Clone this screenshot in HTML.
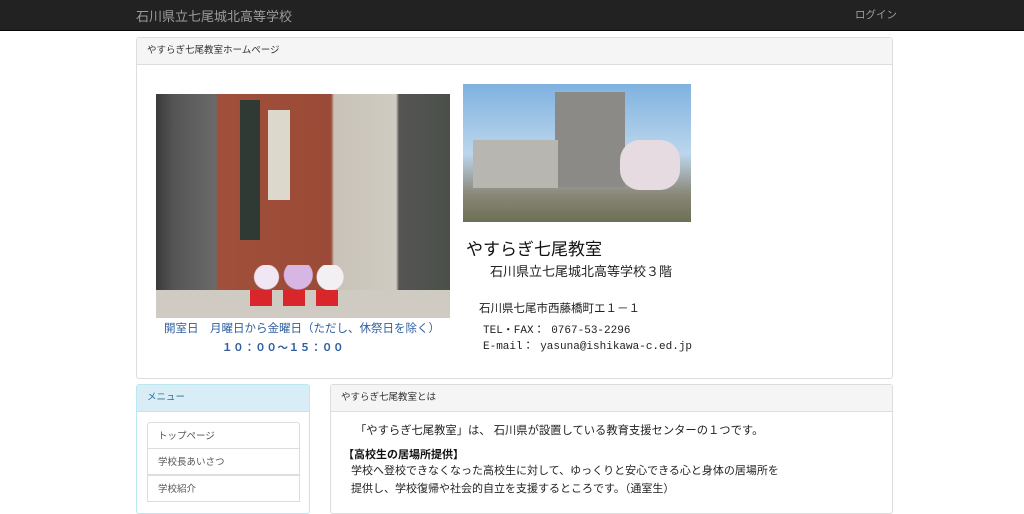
<!DOCTYPE html><html><head><meta charset="utf-8"><style>
body{margin:0;background:#fff;font-family:"Liberation Sans","Noto Sans CJK JP",sans-serif;color:#333;width:1024px;height:505px;overflow:hidden;position:relative}
.nav{position:absolute;left:0;top:0;width:1024px;height:30px;background:#222;border-bottom:1px solid #080808}
.nav .t{position:absolute;left:136px;top:6px;color:#9d9d9d;font-size:13px}
.nav .l{position:absolute;left:855px;top:7px;color:#9d9d9d;font-size:10.5px}
.p{position:absolute;border:1px solid #ddd;border-radius:3px;background:#fff;box-sizing:border-box}
.h{height:26px;background:#f5f5f5;border-bottom:1px solid #ddd;font-size:9.5px;line-height:26px;padding-left:10px}
.a{position:absolute;white-space:nowrap}
.item{position:absolute;left:10px;width:153px;height:27px;border:1px solid #ddd;box-sizing:border-box;font-size:9.5px;line-height:26px;padding-left:10px;color:#555}
</style></head><body>
<div class="nav"><div class="t">石川県立七尾城北高等学校</div><div class="l">ログイン</div></div>
<div class="p" style="left:136px;top:37px;width:757px;height:342px"><div class="h">やすらぎ七尾教室ホームページ</div></div>
<div class="a" style="left:156px;top:94px;width:294px;height:224px;background:linear-gradient(90deg,#3a3a3a 0,#555 18px,#6a6a6a 60px,#a0503a 62px,#9a4a36 175px,#c8c2b8 178px,#d0cbc2 240px,#555 243px,#4a5048 294px)"></div>
<div class="a" style="left:240px;top:100px;width:20px;height:140px;background:#2f3a34"></div>
<div class="a" style="left:268px;top:110px;width:22px;height:90px;background:#ddd8cc"></div>
<div class="a" style="left:156px;top:290px;width:294px;height:28px;background:#cfcac2"></div>
<div class="a" style="left:240px;top:265px;width:106px;height:40px;background:radial-gradient(circle at 25% 30%,#f0e6f4 12px,transparent 13px),radial-gradient(circle at 55% 25%,#d8b6e4 14px,transparent 15px),radial-gradient(circle at 85% 30%,#f2f0f2 13px,transparent 14px)"></div>
<div class="a" style="left:250px;top:290px;width:88px;height:16px;background:repeating-linear-gradient(90deg,#d8262a 0,#d8262a 22px,transparent 22px,transparent 33px)"></div>
<div class="a" style="left:463px;top:84px;width:228px;height:138px;background:linear-gradient(180deg,#7fb2e0 0,#bcd6ec 70px,#8a8878 110px,#6d6f55 138px)"></div>
<div class="a" style="left:555px;top:92px;width:70px;height:95px;background:#8b8a86"></div>
<div class="a" style="left:473px;top:140px;width:85px;height:48px;background:#b8b6b0"></div>
<div class="a" style="left:620px;top:140px;width:60px;height:50px;background:#e7dbe2;border-radius:20px"></div>
<div class="a" style="left:466px;top:235px;font-size:17px;color:#111">やすらぎ七尾教室</div>
<div class="a" style="left:490px;top:261px;font-size:13px;color:#222">石川県立七尾城北高等学校３階</div>
<div class="a" style="left:479px;top:300px;font-size:11.5px;color:#222">石川県七尾市西藤橋町エ１－１</div>
<div class="a" style="left:483px;top:321px;font-size:11px;color:#222;font-family:'Liberation Mono','Noto Sans CJK JP',monospace">TEL・FAX： 0767-53-2296</div>
<div class="a" style="left:483px;top:337px;font-size:11px;color:#222;font-family:'Liberation Mono','Noto Sans CJK JP',monospace">E-mail： yasuna@ishikawa-c.ed.jp</div>
<div class="a" style="left:164px;top:320px;font-size:11.5px;color:#2f5fa0">開室日　月曜日から金曜日（ただし、休祭日を除く）</div>
<div class="a" style="left:222px;top:340px;font-size:10.5px;color:#2f5fa0;letter-spacing:0.6px;font-weight:bold">１０：００～１５：００</div>
<div class="p" style="left:136px;top:384px;width:174px;height:130px;border-color:#bce8f1">
<div class="h" style="background:#d9edf7;border-color:#bce8f1;color:#31708f">メニュー</div>
<div class="item" style="top:37px;border-radius:3px 3px 0 0;line-height:28px">トップページ</div>
<div class="item" style="top:63px;line-height:28px">学校長あいさつ</div>
<div class="item" style="top:90px;line-height:28px">学校紹介</div>
</div>
<div class="p" style="left:330px;top:384px;width:563px;height:130px">
<div class="h">やすらぎ七尾教室とは</div>
<div class="a" style="left:24px;top:37px;font-size:11.3px;color:#222">「やすらぎ七尾教室」は、 石川県が設置している教育支援センターの１つです。</div>
<div class="a" style="left:12px;top:61px;font-size:11px;color:#111;font-weight:bold">【高校生の居場所提供】</div>
<div class="a" style="left:20px;top:77px;font-size:11px;color:#222">学校へ登校できなくなった高校生に対して、ゆっくりと安心できる心と身体の居場所を</div>
<div class="a" style="left:20px;top:95px;font-size:11px;color:#222">提供し、学校復帰や社会的自立を支援するところです。（通室生）</div>
</div>
</body></html>
